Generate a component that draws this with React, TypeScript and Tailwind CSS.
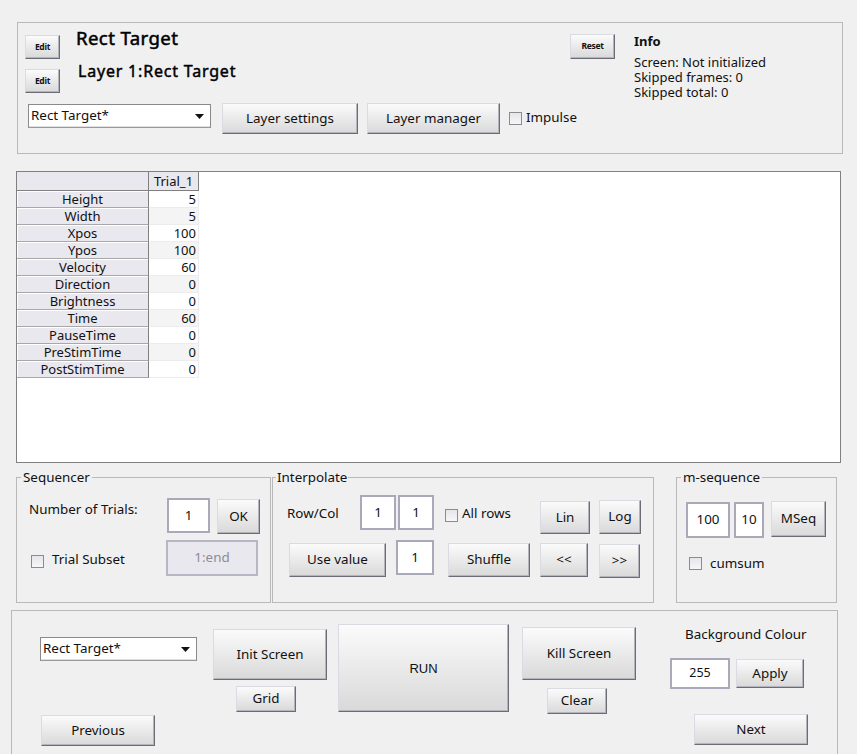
import React from "react";

const btn =
  "flex items-center justify-center shrink-0 border border-t-[#dadae2] border-l-[#dadae2] border-r-[#6c6c76] border-b-[#6c6c76] bg-linear-to-b from-[#fbfbfb] to-[#d9d9d9] shadow-[inset_-1px_-1px_0_#b4b4bc] text-[#111] text-[13.4px] leading-none";
const input =
  "flex items-center justify-center shrink-0 bg-white border-2 border-[#a9a9b9] text-[13.4px] leading-none text-[#111]";
const check = "shrink-0 w-[13px] h-[13px] border border-[#8c8c8c] bg-linear-to-b from-[#e6e6ea] to-[#f6f6f8]";

function Dropdown({ w }: { w: string }) {
  return (
    <div className={`${w} h-[24px] shrink-0 bg-white border border-[#8a8a8a] border-b-[#9a9a9a] flex items-center justify-between pl-[2px] pr-[6px] text-[13.4px] leading-none text-[#111] shadow-[inset_0_-1px_0_#e0e0e0]`}>
      <span>Rect Target*</span>
      <svg width="9" height="5" viewBox="0 0 9 5">
        <path d="M0 0 H9 L4.5 5 Z" fill="#111" />
      </svg>
    </div>
  );
}

const rows: [string, number][] = [
  ["Height", 5],
  ["Width", 5],
  ["Xpos", 100],
  ["Ypos", 100],
  ["Velocity", 60],
  ["Direction", 0],
  ["Brightness", 0],
  ["Time", 60],
  ["PauseTime", 0],
  ["PreStimTime", 0],
  ["PostStimTime", 0],
];

export default function App() {
  return (
    <div
      className="w-[857px] h-[754px] overflow-hidden bg-[#f0f0f0] flex flex-col text-[#111]"
      style={{ fontFamily: '"Noto Sans", "DejaVu Sans", sans-serif' }}
    >
      {/* Top panel */}
      <div className="mt-[22px] ml-[17px] w-[826px] h-[132px] shrink-0 border border-[#b9b9b9] pt-[12px] pl-[7px] flex items-start">
        <div className="w-[590px] flex flex-col">
          <div className="flex items-start h-[24px]">
            <div className={`${btn} w-[35px] h-[24px] !text-[8.5px] font-bold tracking-[-0.3px]`}>Edit</div>
            <div className="ml-[16px] -mt-[9px] text-[18.6px] leading-[24px] font-normal tracking-[0.4px] [-webkit-text-stroke:0.5px_#000] text-black">Rect Target</div>
            <div className={`${btn} ml-auto -mt-[1px] w-[45px] h-[25px] !text-[8.5px] font-bold tracking-[-0.3px]`}>Reset</div>
          </div>
          <div className="flex items-start h-[24px] mt-[10px]">
            <div className={`${btn} w-[35px] h-[24px] !text-[8.5px] font-bold tracking-[-0.3px]`}>Edit</div>
            <div className="ml-[18px] -mt-[9px] text-[16px] leading-[22px] font-normal tracking-[0.8px] [-webkit-text-stroke:0.45px_#000] text-black">Layer 1:Rect Target</div>
          </div>
          <div className="flex items-start mt-[10px]">
            <div className="ml-[3px] mt-[1px]">
              <Dropdown w="w-[183px]" />
            </div>
            <div className={`${btn} ml-[11px] w-[136px] h-[31px]`}>Layer settings</div>
            <div className={`${btn} ml-[9px] w-[133px] h-[31px]`}>Layer manager</div>
            <div className={`${check} ml-[9px] mt-[9px]`} />
            <div className="ml-[4px] mt-[6px] text-[13.4px] leading-[16px]">Impulse</div>
          </div>
        </div>
        <div className="ml-[19px] flex flex-col text-[13px]">
          <div className="-mt-[2px] leading-[16px] font-bold">Info</div>
          <div className="mt-[6px] leading-[15px]">Screen: Not initialized</div>
          <div className="leading-[15px]">Skipped frames: 0</div>
          <div className="leading-[15px]">Skipped total: 0</div>
        </div>
      </div>

      {/* Table */}
      <div className="mt-[17px] ml-[16px] w-[825px] h-[292px] shrink-0 bg-white border border-[#808080] text-[13px] leading-[17px]">
        <div className="flex h-[19px]">
          <div className="w-[132px] bg-[#e9e8ee] border-r border-b border-[#808080]" />
          <div className="w-[50px] bg-[#e9e8ee] border-r border-b border-[#808080] flex items-center justify-center leading-none">Trial_1</div>
        </div>
        {rows.map(([name, v], i) => (
          <div key={name} className="flex h-[17px]">
            <div className="w-[132px] bg-[#e9e8ee] border-r border-b border-r-[#808080] border-b-[#a8a8a8] shadow-[inset_1px_1px_0_#ffffff] text-center">
              {name}
            </div>
            <div className={`w-[50px] border-r border-b border-[#ececec] text-right pr-[2px] ${i % 2 === 1 ? "bg-[#f4f4f4]" : "bg-white"}`}>{v}</div>
          </div>
        ))}
      </div>

      {/* Fieldset row */}
      <div className="mt-[6px] flex items-start shrink-0">
        <fieldset className="ml-[16px] w-[255px] h-[134px] border border-[#b9b9b9] shrink-0">
          <legend className="ml-[4px] px-[2px] text-[13.4px] leading-[16px]">Sequencer</legend>
          <div className="flex items-start mt-[13px]">
            <div className="ml-[12px] w-[138px] mt-[3px] text-[13.4px] leading-[16px]">Number of Trials:</div>
            <div className={`${input} w-[43px] h-[35px]`}>1</div>
            <div className={`${btn} ml-[7px] mt-[1px] w-[43px] h-[35px]`}>OK</div>
          </div>
          <div className="flex items-start mt-[6px]">
            <div className={`${check} ml-[14px] mt-[15px]`} />
            <div className="ml-[8px] w-[114px] mt-[11px] text-[13.4px] leading-[16px]">Trial Subset</div>
            <div className="shrink-0 w-[92px] h-[36px] bg-[#e9e8ee] border-2 border-[#b6b6c4] flex items-center justify-center text-[13.4px] leading-none text-[#8c8c98]">1:end</div>
          </div>
        </fieldset>

        <fieldset className="ml-[1px] w-[382px] h-[134px] border border-[#b9b9b9] shrink-0">
          <legend className="ml-[3px] px-[1px] text-[13.4px] leading-[16px]">Interpolate</legend>
          <div className="flex items-start mt-[10px]">
            <div className="ml-[14px] w-[73px] mt-[10px] text-[13.4px] leading-[16px]">Row/Col</div>
            <div className={`${input} w-[36px] h-[35px]`}>1</div>
            <div className={`${input} ml-[2px] w-[36px] h-[35px]`}>1</div>
            <div className={`${check} ml-[11px] mt-[14px]`} />
            <div className="ml-[4px] w-[78px] mt-[10px] text-[13.4px] leading-[16px]">All rows</div>
            <div className={`${btn} mt-[6px] w-[50px] h-[33px]`}>Lin</div>
            <div className={`${btn} ml-[9px] mt-[5px] w-[42px] h-[34px]`}>Log</div>
          </div>
          <div className="flex items-start mt-[6px]">
            <div className={`${btn} ml-[16px] mt-[3px] w-[97px] h-[34px]`}>Use value</div>
            <div className={`${input} ml-[10px] w-[38px] h-[35px]`}>1</div>
            <div className={`${btn} ml-[14px] mt-[3px] w-[82px] h-[34px]`}>Shuffle</div>
            <div className={`${btn} ml-[10px] mt-[3px] w-[48px] h-[34px]`}>&lt;&lt;</div>
            <div className={`${btn} ml-[11px] mt-[4px] w-[41px] h-[34px]`}>&gt;&gt;</div>
          </div>
        </fieldset>

        <fieldset className="ml-[22px] w-[161px] h-[134px] border border-[#b9b9b9] shrink-0">
          <legend className="ml-[4px] px-[2px] text-[13.4px] leading-[16px]">m-sequence</legend>
          <div className="flex items-start mt-[16px]">
            <div className={`${input} ml-[9px] mt-[1px] w-[44px] h-[36px]`}>100</div>
            <div className={`${input} ml-[4px] mt-[1px] w-[30px] h-[36px]`}>10</div>
            <div className={`${btn} ml-[7px] w-[55px] h-[36px]`}>MSeq</div>
          </div>
          <div className="flex items-start mt-[19px]">
            <div className={`${check} ml-[12px]`} />
            <div className="ml-[8px] -mt-[2px] text-[13.4px] leading-[16px]">cumsum</div>
          </div>
        </fieldset>
      </div>

      {/* Bottom panel */}
      <div className="mt-[7px] ml-[11px] w-[827px] h-[170px] shrink-0 border border-[#b9b9b9] flex items-start">
        <div className="ml-[28px] mt-[26px] flex flex-col">
          <Dropdown w="w-[157px]" />
          <div className={`${btn} mt-[54px] ml-[1px] w-[114px] h-[31px]`}>Previous</div>
        </div>
        <div className="ml-[16px] mt-[18px] flex flex-col">
          <div className={`${btn} w-[114px] h-[51px]`}>Init Screen</div>
          <div className={`${btn} mt-[6px] ml-[23px] w-[60px] h-[26px]`}>Grid</div>
        </div>
        <div
          className={`${btn} ml-[11px] mt-[13px] w-[171px] h-[88px] !text-[13px]`}
          style={{ fontFamily: '"Liberation Sans", Arial, sans-serif' }}
        >
          RUN
        </div>
        <div className="ml-[13px] mt-[16px] flex flex-col">
          <div className={`${btn} w-[114px] h-[53px]`}>Kill Screen</div>
          <div className={`${btn} mt-[8px] ml-[25px] w-[60px] h-[26px]`}>Clear</div>
        </div>
        <div className="ml-[34px] flex flex-col">
          <div className="ml-[15px] mt-[15px] text-[13.4px] leading-[16px]">Background Colour</div>
          <div className="flex items-start mt-[16px]">
            <div className={`${input} w-[60px] h-[31px] !text-[12.5px]`}>255</div>
            <div className={`${btn} ml-[6px] mt-[1px] w-[68px] h-[29px]`}>Apply</div>
          </div>
          <div className={`${btn} mt-[25px] ml-[24px] w-[114px] h-[31px]`}>Next</div>
        </div>
      </div>
    </div>
  );
}
